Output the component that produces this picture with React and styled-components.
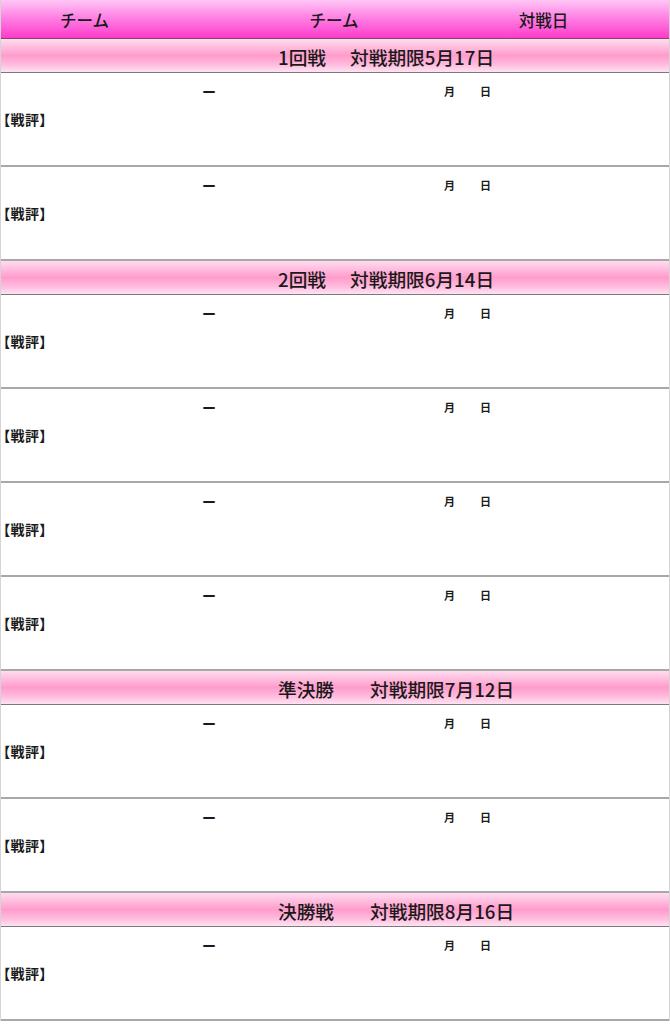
import React from 'react'
import styled, { createGlobalStyle } from 'styled-components'

const rounds = [
  { name: '1回戦', gap: 24, deadline: '対戦期限5月17日', matches: 2 },
  { name: '2回戦', gap: 24, deadline: '対戦期限6月14日', matches: 4 },
  { name: '準決勝', gap: 36, deadline: '対戦期限7月12日', matches: 2 },
  { name: '決勝戦', gap: 36, deadline: '対戦期限8月16日', matches: 1 },
]

function App() {
  return (
    <>
      <GlobalStyle />
      <Table>
        <HeadRow>
          <HeadCell>チーム</HeadCell>
          <HeadCell />
          <HeadCell>チーム</HeadCell>
          <HeadCell>対戦日</HeadCell>
        </HeadRow>
        {rounds.map((r) => (
          <React.Fragment key={r.name}>
            <RoundRow>
              <RoundName $gap={r.gap}>{r.name}</RoundName>
              <span>{r.deadline}</span>
            </RoundRow>
            {Array.from({ length: r.matches }).map((_, i) => (
              <MatchRow key={i}>
                <MatchLine>
                  <Team />
                  <Vs>ー</Vs>
                  <Team />
                  <DateCell>
                    <span>月</span>
                    <span>日</span>
                  </DateCell>
                </MatchLine>
                <Review>【戦評】</Review>
              </MatchRow>
            ))}
          </React.Fragment>
        ))}
      </Table>
    </>
  )
}

export default App

const GlobalStyle = createGlobalStyle`
  body {
    margin: 0;
    background: #fff;
    font-family: "Noto Sans CJK JP", "Noto Sans", sans-serif;
    color: #1a1a1a;
  }
`

const Table = styled.div`
  width: 670px;
  box-sizing: border-box;
  border-left: 1px solid #d4d4d4;
  border-right: 1px solid #d4d4d4;
`

const columns = `
  display: grid;
  grid-template-columns: 167px 82px 168px 1fr;
`

const HeadRow = styled.div`
  ${columns}
  height: 38px;
  align-items: center;
  background: linear-gradient(#ffc6f6 0%, #ff8ae6 40%, #ff3acb 100%);
  border-bottom: 1px solid #7a4a6e;
`

const HeadCell = styled.div`
  text-align: center;
  font-size: 16.5px;
  font-weight: 500;
  padding-top: 2px;
`

const RoundRow = styled.div`
  height: 34px;
  display: flex;
  align-items: center;
  padding-left: 277px;
  padding-top: 1px;
  box-sizing: border-box;
  background: linear-gradient(#ffdcef 0%, #ffb6db 30%, #ff9ccc 50%, #ffb8dc 75%, #ffe2f3 100%);
  border-bottom: 1px solid #7a7a7a;
  font-size: 18.7px;
  font-weight: 500;
`

const RoundName = styled.span`
  margin-right: ${(p) => p.$gap}px;
`

const MatchRow = styled.div`
  height: 92px;
  border-bottom: 2px solid #a8a8a8;
  display: flex;
  flex-direction: column;
`

const MatchLine = styled.div`
  ${columns}
  padding-top: 8px;
  height: 20px;
  align-items: center;
`

const Team = styled.div``

const Vs = styled.div`
  text-align: center;
  font-size: 14px;
  font-weight: 700;
`

const DateCell = styled.div`
  display: flex;
  gap: 25px;
  padding-left: 26px;
  font-size: 11px;
  font-weight: 700;
`

const Review = styled.div`
  margin-top: 8px;
  padding-left: 2px;
  font-size: 14px;
  font-weight: 700;
  font-feature-settings: "palt";
  letter-spacing: 0.5px;
`
